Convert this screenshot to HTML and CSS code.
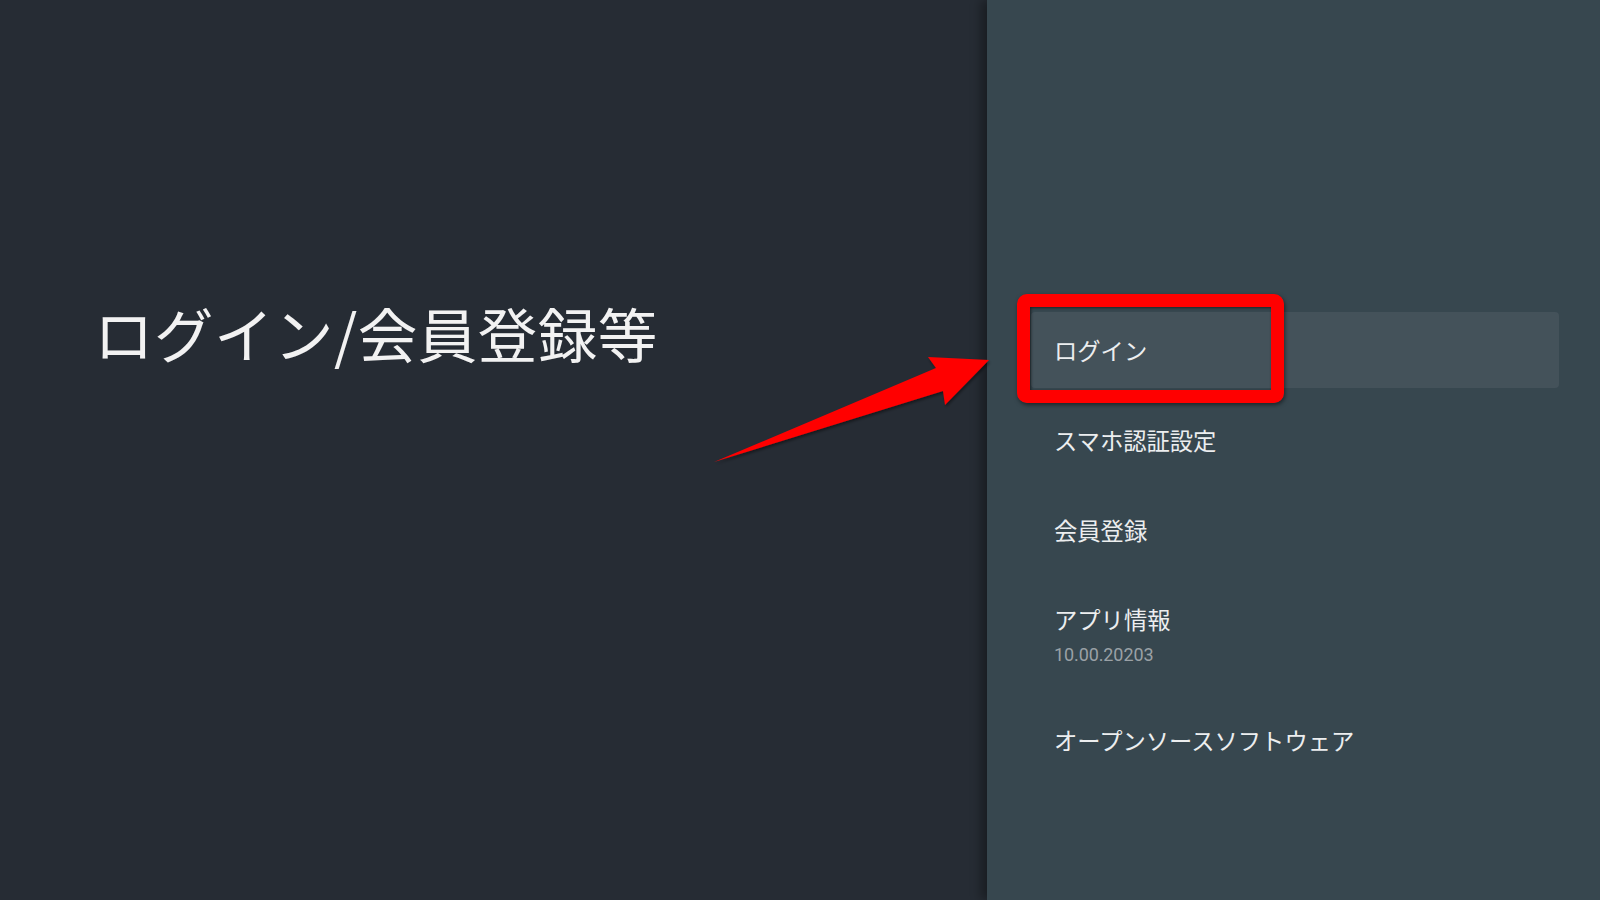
FILE: index.html
```html
<!DOCTYPE html>
<html lang="ja">
<head>
<meta charset="utf-8">
<title>ログイン/会員登録等</title>
<link rel="stylesheet" href="styles.css">
</head>
<body>
<div class="screen">
  <section class="guidance">
    <h1 class="title">ログイン/会員登録等</h1>
  </section>
  <section class="actions">
    <ul class="menu">
      <li class="item is-focused"><span class="item-title">ログイン</span></li>
      <li class="item"><span class="item-title">スマホ認証設定</span></li>
      <li class="item"><span class="item-title">会員登録</span></li>
      <li class="item item-two"><span class="item-title">アプリ情報</span><span class="item-desc">10.00.20203</span></li>
      <li class="item"><span class="item-title">オープンソースソフトウェア</span></li>
    </ul>
  </section>
  <div class="mark-box"></div>
  <svg class="mark-arrow" width="1600" height="900" viewBox="0 0 1600 900">
    <defs>
      <filter id="sh" x="-10%" y="-10%" width="120%" height="130%">
        <feDropShadow dx="1" dy="2" stdDeviation="1.5" flood-color="#000" flood-opacity="0.45"/>
      </filter>
    </defs>
    <polygon points="714,462 936,368 928,357 989,360 945,405 943,391" fill="#ff0000" filter="url(#sh)"/>
  </svg>
</div>
</body>
</html>
```
FILE: styles.css
```css
* { box-sizing: border-box; }
html, body { margin: 0; padding: 0; }
body {
  width: 1600px;
  height: 900px;
  overflow: hidden;
  background: #262c34;
  font-family: "Noto Sans CJK JP", "Noto Sans", Roboto, sans-serif;
}
.screen {
  position: relative;
  display: flex;
  width: 1600px;
  height: 900px;
}
.guidance {
  width: 987px;
  flex: 0 0 987px;
  background: #262c34;
  padding: 302px 0 0 94px;
}
.title {
  margin: 0;
  font-weight: 400;
  font-size: 59.5px;
  line-height: 60px;
  color: #f2f2f2;
  letter-spacing: 0.5px;
}
.actions {
  flex: 1;
  background: #37474f;
  box-shadow: -6px 0 10px rgba(0,0,0,0.35);
  padding: 312px 41px 0 44px;
  position: relative;
  z-index: 1;
}
.menu {
  list-style: none;
  margin: 0;
  padding: 0;
  display: flex;
  flex-direction: column;
  gap: 14px;
}
.item {
  display: flex;
  flex-direction: column;
  padding: 25px 23px;
  border-radius: 4px;
}
.item.is-focused { background: #44525a; }
.item-title {
  font-size: 23.3px;
  line-height: 26px;
  color: #eceeef;
}
.item-two { padding-top: 24px; padding-bottom: 22px; }
.item-desc {
  margin-top: 11px;
  font-family: Roboto, "Noto Sans", sans-serif;
  font-size: 18px;
  line-height: 23px;
  color: #9aa1a6;
  letter-spacing: -0.1px;
}
.mark-box {
  position: absolute;
  left: 1017px;
  top: 294px;
  width: 267px;
  height: 109px;
  border: 13px solid #ff0000;
  border-radius: 10px;
  box-shadow: 1px 2px 4px rgba(0,0,0,0.5), inset 1px 1px 3px rgba(0,0,0,0.55);
  z-index: 2;
}
.mark-arrow {
  position: absolute;
  left: 0;
  top: 0;
  z-index: 3;
  pointer-events: none;
}
```
